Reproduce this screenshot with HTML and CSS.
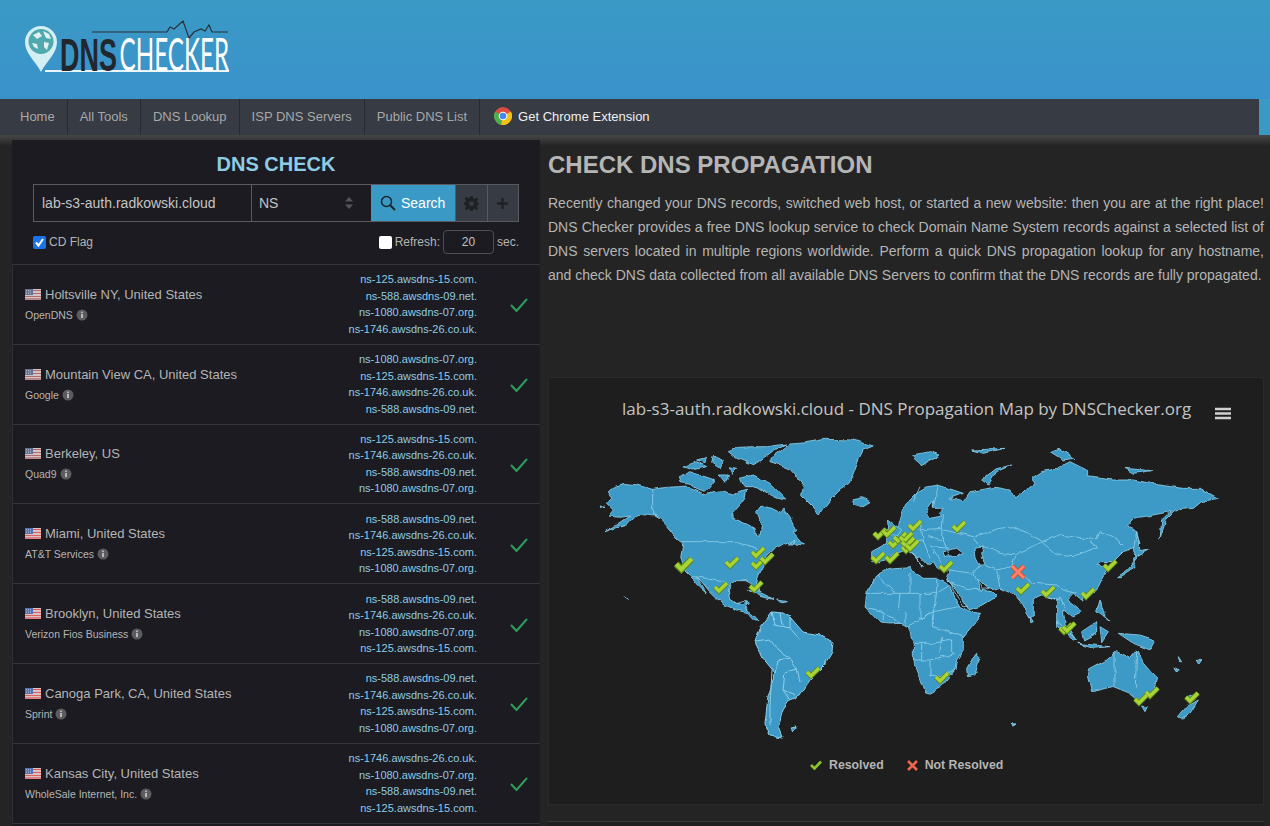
FILE: index.html
```html
<!DOCTYPE html>
<html lang="en">
<head>
<meta charset="utf-8">
<title>DNS Checker</title>
<link rel="stylesheet" href="styles.css">
</head>
<body>
<svg class="defs" width="0" height="0" aria-hidden="true">
  <defs>
    <g id="ok"><path d="M-6,0 L-2,4 L6,-4" class="ok-a"/><path d="M-6,0 L-2,4 L6,-4" class="ok-b"/></g>
    <g id="us"><rect width="16" height="11" fill="#e2e2e6"/><path d="M0,1.500H16M0,4.500H16M0,7.500H16M0,10H16" stroke="#d8605c" stroke-width="1.300"/><rect width="8" height="6" fill="#5570b0"/><path d="M1,1.500H7M1,3H7M1,4.500H7" stroke="#cdd6ec" stroke-width=".6" stroke-dasharray="1 1"/></g>
    <g id="info"><circle cx="6" cy="6" r="5.500" fill="#5c5c60"/><rect x="5.200" y="5" width="1.600" height="4" fill="#cfcfcf"/><rect x="5.200" y="2.600" width="1.600" height="1.500" fill="#cfcfcf"/></g>
    <filter id="rough" x="-2%" y="-2%" width="104%" height="104%">
      <feTurbulence type="fractalNoise" baseFrequency=".11" numOctaves="2" seed="4"/>
      <feDisplacementMap in="SourceGraphic" scale="4.500" xChannelSelector="R" yChannelSelector="G"/>
    </filter>
  </defs>
</svg>
<header class="top">
  <div class="brand">
    <svg class="logo" width="210" height="50" viewBox="0 0 210 50">
      <path d="M16,47 C10,35 0,29 0,17 A16,16 0 0 1 32,17 C32,29 22,35 16,47Z" fill="#d4eff4"/>
      <circle cx="16" cy="16.500" r="12.500" fill="#4fa9ad"/>
      <path d="M8,10l6,-3 3,4 -5,3zM18,6l6,3 2,5 -5,-1zM19,17l5,1 -2,7 -3,-3zM7,18l5,1 1,5 -4,-2z" fill="#e3f1f2"/>
      <path d="M20,46H204" stroke="#e9f6fb" stroke-width="2"/>
      <path d="M67,7H142L145,2 149,4 158,-4 164,13 169,7 176,4 180,6 184,0 187,7 203,7" fill="none" stroke="#2a3038" stroke-width="1.200"/>
      <g transform="translate(35 45.500) scale(.575 1)"><text class="logo-dns" textLength="99" lengthAdjust="spacingAndGlyphs">DNS</text></g>
      <g transform="translate(94.500 45.500) scale(.537 1)"><text class="logo-checker" textLength="204" lengthAdjust="spacingAndGlyphs">CHECKER</text></g>
    </svg>
  </div>
  <nav class="nav">
    <a class="nav-item nav-first">Home</a>
    <a class="nav-item">All Tools</a>
    <a class="nav-item">DNS Lookup</a>
    <a class="nav-item">ISP DNS Servers</a>
    <a class="nav-item">Public DNS List</a>
    <a class="nav-ext">
      <svg width="18" height="18" viewBox="0 0 18 18">
        <circle cx="9" cy="9" r="9" fill="#dd4b3e"/>
        <path d="M9,9 L1.200,4.500 A9,9 0 0 0 7,17.800Z" fill="#4caf50"/>
        <path d="M9,9 L7,17.800 A9,9 0 0 0 16.800,4.500Z" fill="#f4c20d"/>
        <circle cx="9" cy="9" r="4.300" fill="#fff"/>
        <circle cx="9" cy="9" r="3.300" fill="#4a86e8"/>
      </svg>
      Get Chrome Extension
    </a>
  </nav>
</header>
<main class="layout">
  <section class="side">
    <h2 class="side-title">DNS CHECK</h2>
    <div class="form">
      <div class="f-input">lab-s3-auth.radkowski.cloud</div>
      <div class="f-select">NS
        <svg width="8" height="12" viewBox="0 0 8 12"><path d="M4,0 L8,4.500H0ZM4,12 L8,7.500H0Z" fill="#55555a"/></svg>
      </div>
      <div class="f-search">
        <svg width="16" height="16" viewBox="0 0 16 16"><circle cx="6.500" cy="6.500" r="5" fill="none" stroke="#17252e" stroke-width="1.500"/><path d="M10.200,10.200 L15,15" stroke="#17252e" stroke-width="2"/></svg>
        Search
      </div>
      <div class="f-tool">
        <svg width="15" height="15" viewBox="0 0 16 16"><path d="M6.700,0H9.300l.4,2.500 1.600,.7 2.100,-1.500 1.800,1.800 -1.500,2.100 .7,1.600 2.500,.4V9.300l-2.500,.4 -.7,1.600 1.500,2.100 -1.800,1.800 -2.100,-1.500 -1.600,.7 -.4,2.500H6.700l-.4,-2.500 -1.600,-.7 -2.100,1.500 -1.800,-1.800 1.500,-2.100 -.7,-1.600 -2.500,-.4V6.700l2.500,-.4 .7,-1.600 -1.500,-2.100 1.800,-1.800 2.100,1.500 1.600,-.7ZM8,5.500a2.500,2.500 0 1 0 .01,0Z" fill="#1f2125" fill-rule="evenodd"/></svg>
      </div>
      <div class="f-tool">
        <svg width="13" height="13" viewBox="0 0 13 13"><path d="M6.500,1V12M1,6.500H12" stroke="#1f2125" stroke-width="2.400"/></svg>
      </div>
    </div>
    <div class="opts">
      <label class="opt"><span class="cb cb-on"><svg width="13" height="13" viewBox="0 0 13 13"><path d="M3,6.500 L5.500,9.500 L10,3" fill="none" stroke="#fff" stroke-width="2"/></svg></span>CD Flag</label>
      <div class="opt"><span class="cb"></span>Refresh:<span class="sec-box">20</span>sec.</div>
    </div>
    <ul class="rows">
      <li class="row"><div class="loc"><div class="place"><svg class="flag-dim" width="16" height="11"><use href="#us"/></svg>Holtsville NY, United States</div><div class="isp">OpenDNS <svg class="i" width="12" height="12"><use href="#info"/></svg></div></div><div class="ns">ns-125.awsdns-15.com.<br>ns-588.awsdns-09.net.<br>ns-1080.awsdns-07.org.<br>ns-1746.awsdns-26.co.uk.</div><svg class="tick" width="18" height="14" viewBox="0 0 18 14"><path d="M1,7 L6.500,13 L17,1" fill="none" stroke="#2f9e58" stroke-width="2"/></svg></li>
      <li class="row"><div class="loc"><div class="place"><svg class="flag-dim" width="16" height="11"><use href="#us"/></svg>Mountain View CA, United States</div><div class="isp">Google <svg class="i" width="12" height="12"><use href="#info"/></svg></div></div><div class="ns">ns-1080.awsdns-07.org.<br>ns-125.awsdns-15.com.<br>ns-1746.awsdns-26.co.uk.<br>ns-588.awsdns-09.net.</div><svg class="tick" width="18" height="14" viewBox="0 0 18 14"><path d="M1,7 L6.500,13 L17,1" fill="none" stroke="#2f9e58" stroke-width="2"/></svg></li>
      <li class="row"><div class="loc"><div class="place"><svg class="flag-dim" width="16" height="11"><use href="#us"/></svg>Berkeley, US</div><div class="isp">Quad9 <svg class="i" width="12" height="12"><use href="#info"/></svg></div></div><div class="ns">ns-125.awsdns-15.com.<br>ns-1746.awsdns-26.co.uk.<br>ns-588.awsdns-09.net.<br>ns-1080.awsdns-07.org.</div><svg class="tick" width="18" height="14" viewBox="0 0 18 14"><path d="M1,7 L6.500,13 L17,1" fill="none" stroke="#2f9e58" stroke-width="2"/></svg></li>
      <li class="row"><div class="loc"><div class="place"><svg width="16" height="11"><use href="#us"/></svg>Miami, United States</div><div class="isp">AT&amp;T Services <svg class="i" width="12" height="12"><use href="#info"/></svg></div></div><div class="ns">ns-588.awsdns-09.net.<br>ns-1746.awsdns-26.co.uk.<br>ns-125.awsdns-15.com.<br>ns-1080.awsdns-07.org.</div><svg class="tick" width="18" height="14" viewBox="0 0 18 14"><path d="M1,7 L6.500,13 L17,1" fill="none" stroke="#2f9e58" stroke-width="2"/></svg></li>
      <li class="row"><div class="loc"><div class="place"><svg width="16" height="11"><use href="#us"/></svg>Brooklyn, United States</div><div class="isp">Verizon Fios Business <svg class="i" width="12" height="12"><use href="#info"/></svg></div></div><div class="ns">ns-588.awsdns-09.net.<br>ns-1746.awsdns-26.co.uk.<br>ns-1080.awsdns-07.org.<br>ns-125.awsdns-15.com.</div><svg class="tick" width="18" height="14" viewBox="0 0 18 14"><path d="M1,7 L6.500,13 L17,1" fill="none" stroke="#2f9e58" stroke-width="2"/></svg></li>
      <li class="row"><div class="loc"><div class="place"><svg width="16" height="11"><use href="#us"/></svg>Canoga Park, CA, United States</div><div class="isp">Sprint <svg class="i" width="12" height="12"><use href="#info"/></svg></div></div><div class="ns">ns-588.awsdns-09.net.<br>ns-1746.awsdns-26.co.uk.<br>ns-125.awsdns-15.com.<br>ns-1080.awsdns-07.org.</div><svg class="tick" width="18" height="14" viewBox="0 0 18 14"><path d="M1,7 L6.500,13 L17,1" fill="none" stroke="#2f9e58" stroke-width="2"/></svg></li>
      <li class="row"><div class="loc"><div class="place"><svg width="16" height="11"><use href="#us"/></svg>Kansas City, United States</div><div class="isp">WholeSale Internet, Inc. <svg class="i" width="12" height="12"><use href="#info"/></svg></div></div><div class="ns">ns-1746.awsdns-26.co.uk.<br>ns-1080.awsdns-07.org.<br>ns-588.awsdns-09.net.<br>ns-125.awsdns-15.com.</div><svg class="tick" width="18" height="14" viewBox="0 0 18 14"><path d="M1,7 L6.500,13 L17,1" fill="none" stroke="#2f9e58" stroke-width="2"/></svg></li>
    </ul>
  </section>
  <section class="content">
    <h1 class="title">CHECK DNS PROPAGATION</h1>
    <p class="intro">Recently changed your DNS records, switched web host, or started a new website: then you are at the right place! DNS Checker provides a free DNS lookup service to check Domain Name System records against a selected list of DNS servers located in multiple regions worldwide. Perform a quick DNS propagation lookup for any hostname, and check DNS data collected from all available DNS Servers to confirm that the DNS records are fully propagated.</p>
    <div class="map-panel">
      <div class="map-head">
        <span class="map-title">lab-s3-auth.radkowski.cloud - DNS Propagation Map by DNSChecker.org</span>
        <svg class="burger" width="16" height="13" viewBox="0 0 16 13"><path d="M0,2H16M0,6.500H16M0,11H16" stroke="#d0d0d0" stroke-width="2.600"/></svg>
      </div>
      <svg class="map" width="716" height="330" viewBox="548 425 716 330">
        <g class="world">
        <g class="land" transform="translate(590 430) scale(.33333)">
          <path d="M55,185 L70,172 L105,160 L140,165 L188,178 L230,172 L265,170 L290,168 L320,180 L345,195 L360,190 L395,185 L430,195 L445,185 L470,178 L465,205 L450,225 L428,250 L430,265 L470,282 L495,295 L500,315 L510,315 L518,285 L505,260 L500,245 L515,225 L545,235 L575,250 L580,235 L600,260 L620,305 L610,310 L640,345 L600,340 L590,335 L575,345 L555,355 L540,370 L528,380 L525,400 L512,425 L500,445 L505,470 L510,485 L498,482 L485,460 L470,452 L440,452 L425,462 L415,480 L418,505 L440,520 L460,525 L470,510 L478,520 L465,535 L490,555 L505,570 L490,570 L470,548 L440,540 L405,525 L380,505 L355,480 L335,455 L320,440 L350,488 L325,465 L305,440 L285,420 L272,385 L278,340 L258,325 L240,300 L215,270 L190,255 L150,250 L128,265 L110,285 L75,295 L45,305 L90,280 L120,258 L90,262 L55,258 L70,240 L50,220 L65,205Z"/>
          <path d="M540,85 L560,70 L600,42 L650,38 L700,28 L790,30 L850,48 L820,60 L805,90 L790,130 L780,160 L750,180 L720,210 L695,240 L688,255 L670,235 L650,215 L635,200 L640,165 L620,140 L600,118 L570,105 L540,95Z"/>
          <path d="M785,210 L820,203 L840,215 L815,230 L790,222Z"/>
          <path d="M415,65 L445,52 L490,50 L530,50 L590,42 L550,62 L520,85 L490,105 L465,95 L440,85Z"/>
          <path d="M265,140 L300,125 L345,140 L375,150 L360,170 L345,185 L320,175 L300,160 L270,155Z"/>
          <path d="M280,110 L320,95 L350,110 L310,120Z"/>
          <path d="M320,90 L350,82 L345,98Z"/>
          <path d="M370,78 L400,90 L390,115 L365,100Z"/>
          <path d="M385,135 L415,135 L405,160Z"/>
          <path d="M415,110 L440,115 L425,130Z"/>
          <path d="M450,145 L490,135 L520,150 L540,160 L590,210 L560,205 L540,195 L500,170 L460,170Z"/>
          <path d="M470,478 L520,492 L552,508 L510,500Z"/>
          <path d="M560,510 L592,515 L570,520Z"/>
          <path d="M595,345 L618,330 L612,345Z"/>
          <path d="M30,228 L45,232 L35,235Z"/>
          <path d="M102,497 L118,508 L110,505Z"/>
          <path class="border" d="M188,178V252 L205,260M275,335 L440,335 L470,345 L505,355M310,440 L350,445 L395,455 L420,470M440,520 L470,510 L470,540"/>
        </g>
        <g class="land">
          <path d="M760,628 L772,612 L783,613 L790,617 L803,632 L820,635 L833,643 L832,652 L823,667 L810,680 L800,695 L790,700 L783,710 L778,727 L782,737 L770,735 L765,723 L768,697 L775,673 L762,657 L755,642Z"/>
          <path d="M791,728 L796,727 L793,731Z"/>
          <path d="M1012,723 L1016,723 L1013,725Z"/>
          <path class="border" d="M772,612 L775,625 L790,628 L800,640M755,642 L770,640 L778,650 L790,658 L797,668 L800,682M775,673 L778,660 L790,658M772,670 L770,705 L770,725M797,668 L785,672 L783,690 L795,695M790,700 L783,690M780,613 L782,625M790,617 L790,628"/>
        </g>
        <g class="land" transform="translate(900 430) scale(.33333)">
          <path d="M-40,310 L-5,290 L8,245 L25,215 L50,190 L85,170 L115,165 L190,190 L150,205 L190,215 L210,185 L240,180 L285,172 L330,180 L345,205 L365,190 L380,175 L405,165 L395,145 L425,125 L470,115 L510,95 L560,120 L560,140 L600,145 L640,150 L700,150 L780,165 L850,175 L900,175 L955,205 L905,215 L880,235 L825,240 L800,265 L780,325 L785,270 L810,245 L760,255 L700,265 L680,290 L710,305 L720,345 L670,365 L640,395 L600,395 L590,405 L625,415 L605,450 L590,480 L550,500 L545,510 L520,490 L500,510 L545,545 L515,560 L490,540 L495,580 L525,625 L470,580 L470,510 L445,500 L425,495 L400,505 L400,560 L390,565 L365,520 L345,495 L300,475 L285,480 L270,470 L235,455 L240,480 L275,485 L290,500 L240,530 L205,540 L155,460 L140,450 L150,420 L115,420 L100,395 L85,405 L60,380 L50,385 L70,410 L40,375 L20,360 L-25,375 L-30,385 L-60,395 L-85,395 L-85,365 L-40,340Z"/>
          <path d="M-30,414 L30,410 L35,425 L70,445 L110,445 L150,465 L175,530 L205,545 L245,550 L215,590 L190,620 L190,660 L170,690 L165,720 L125,770 L90,790 L75,785 L55,730 L40,690 L40,640 L25,590 L0,580 L-30,582 L-60,579 L-105,531 L-100,490 L-70,435Z"/>
          <path d="M230,670 L240,680 L225,735 L205,740 L203,715Z"/>
          <path d="M565,720 L620,690 L650,665 L690,685 L710,660 L730,700 L770,745 L760,785 L720,815 L690,790 L640,770 L600,780 L575,785 L562,735Z"/>
          <path d="M835,860 L860,830 L895,810 L870,850 L845,865Z"/>
          <path d="M860,800 L880,790 L885,810Z"/>
          <path d="M725,828 L742,830 L735,845Z"/>
          <path d="M650,440 L680,420 L710,385 L700,360 L710,305 L720,365 L745,360 L700,385 L705,410 L660,440Z"/>
          <path d="M470,575 L530,630 L520,630 L470,590Z"/>
          <path d="M530,640 L630,650 L580,655Z"/>
          <path d="M545,605 L590,575 L590,610 L550,630Z"/>
          <path d="M600,590 L625,605 L605,635Z"/>
          <path d="M655,610 L720,615 L765,630 L750,660 L700,640Z"/>
          <path d="M600,510 L615,560 L630,575 L590,545Z"/>
          <path d="M390,560 L400,575 L392,578Z"/>
          <path d="M-35,270 L5,300 L-10,320 L-40,310Z"/>
          <path d="M35,75 L90,65 L120,75 L65,105Z"/>
          <path d="M245,150 L290,115 L335,105 L290,125 L265,165Z"/>
          <path d="M450,65 L480,55 L525,85 L490,90Z"/>
          <path d="M215,60 L315,55 L250,70Z"/>
          <path d="M675,115 L755,122 L700,130Z"/>
          <path d="M835,680 L845,695 L838,695Z"/>
          <path d="M822,712 L838,720 L828,722Z"/>
          <path d="M888,695 L905,690 L897,702Z"/>
          <path d="M333,880 L345,880 L338,885Z"/>
          <path class="gap" d="M100,215 L75,250 L90,265 L125,258 L115,250 L130,235 L100,235Z"/>
          <path class="gap" d="M128,365 L170,355 L190,370 L165,382 L135,380Z"/>
          <path class="gap" d="M225,355 L250,350 L245,370 L255,405 L240,405 L228,380Z"/>
          <path class="gap" d="M155,460 L200,530 L190,530 L160,480Z"/>
          <path class="gap" d="M232,450 L270,475 L250,478Z"/>
          <path class="border" d="M220,320 L300,295 L340,290 L385,310 L425,335 L480,315 L520,320 L590,330 L600,305 L640,320 L670,345M425,335 L470,375 L520,380 L590,350 L570,335M220,325 L240,350 L280,360 L300,370 L345,375 L405,345 L425,335M345,380 L335,410 L400,460 L470,465 L490,480 L530,490M290,420 L300,475M250,405 L290,420 L335,410M150,420 L215,430 L250,405M215,430 L235,455M140,450 L200,475 L240,480M115,165 L100,235M130,255 L125,320 L150,380M60,275 L70,330 L90,385M-40,340 L70,330M10,345 L50,385M130,300 L220,320M480,500 L500,545M440,500 L480,510M85,320 L130,330M90,350 L150,355M55,300 L125,295M60,170 L40,215M100,360 L125,395"/>
          <path class="border" d="M30,430 L30,490 L110,490 L150,465M110,445 L110,490 L100,545 L60,570M-70,435 L-15,490 L30,490M-105,531 L-50,545 L0,580M60,570 L100,545 L175,530M100,545 L100,590 L190,620M40,640 L100,640 L155,630M40,690 L90,690 L165,670M90,690 L90,735 L125,740 L165,720M60,570 L25,590M-100,490 L-15,490M155,630 L155,670M0,490 L-5,540M60,490 L60,570M-50,545 L-50,579M15,545 L15,585M125,620 L120,670M65,640 L65,690"/>
          <path class="border" d="M710,660 L706,770M645,670 L645,770"/>
        </g>
        </g>
        <g class="markers">
          <use href="#ok" transform="translate(684 564) scale(1.300)"/>
          <use href="#ok" x="732" y="562"/><use href="#ok" x="758" y="552"/><use href="#ok" x="758" y="563"/><use href="#ok" x="767" y="558"/>
          <use href="#ok" x="721" y="587"/><use href="#ok" x="756" y="586"/><use href="#ok" x="813" y="672"/>
          <use href="#ok" x="880" y="533"/><use href="#ok" x="889" y="531"/><use href="#ok" x="915" y="525"/>
          <use href="#ok" x="895" y="542"/><use href="#ok" x="900" y="537"/><use href="#ok" x="906" y="537"/><use href="#ok" x="908" y="547"/><use href="#ok" x="908" y="542"/><use href="#ok" x="912" y="545"/>
          <use href="#ok" x="878" y="557"/><use href="#ok" x="892" y="557"/><use href="#ok" x="959" y="526"/><use href="#ok" x="946" y="566"/>
          <use href="#ok" x="1023" y="588"/><use href="#ok" x="1048" y="591"/><use href="#ok" x="1088" y="593"/><use href="#ok" x="1110" y="565"/>
          <use href="#ok" x="1066" y="628"/><use href="#ok" x="1069" y="627"/><use href="#ok" x="942" y="677"/>
          <use href="#ok" x="1152" y="692"/><use href="#ok" x="1141" y="699"/><use href="#ok" x="1192" y="697"/>
          <path d="M1012,566 L1024,578M1024,566 L1012,578" class="x-a"/><path d="M1012,566 L1024,578M1024,566 L1012,578" class="x-b"/>
        </g>
      </svg>
      <div class="legend">
        <span class="leg"><svg width="12" height="10" viewBox="0 0 12 10"><path d="M1,5 L4.500,8.500 L11,1.500" fill="none" stroke="#8fc42e" stroke-width="2.600"/></svg>Resolved</span>
        <span class="leg"><svg width="11" height="11" viewBox="0 0 11 11"><path d="M1,1 L10,10M10,1 L1,10" stroke="#f0664c" stroke-width="2.600"/></svg>Not Resolved</span>
      </div>
    </div>
    <div class="next-panel"></div>
  </section>
</main>
</body>
</html>
```
FILE: styles.css
```css
* { box-sizing: border-box; }
html, body { margin: 0; height: 826px; overflow: hidden; }
body { background: #242424; font-family: "Liberation Sans", Arial, sans-serif; color: #bdbdbd; }
.defs { position: absolute; }
.top { background: linear-gradient(#3a9ac5, #3a92cb 99px, #3a9ac5 99px); }
.brand { height: 99px; padding: 25px 0 0 25px; }
.logo { display: block; overflow: visible; }
.logo-dns { font: 700 47px "Liberation Sans", sans-serif; fill: #22272e; }
.logo-checker { font: 400 47px Lato, sans-serif; fill: #fff; }
.nav { height: 36px; width: 1259px; background: #363b44; display: flex; align-items: stretch; font-size: 13px; }
.nav-item { display: flex; align-items: center; padding: 0 12px 2px; border-right: 1px solid #272a30; color: #a8a8a8; }
.nav-first { padding-left: 20px; }
.nav-ext { display: flex; align-items: center; gap: 6px; margin-left: 14px; padding-bottom: 2px; color: #f0f0f0; }
.layout { display: flex; align-items: flex-start; padding: 5px 0 0 12px; gap: 8px; background: linear-gradient(#474747, #242424 11px); height: 691px; }
.side { width: 528px; background: #1b1b21; flex: none; height: 686px; overflow: hidden; }
.side-title { margin: 0; padding-top: 11px; height: 44px; text-align: center; color: #8ecbe5; font-size: 20px; line-height: 26px; }
.form { display: flex; margin: 0 21px; height: 38px; font-size: 14px; border: 1px solid #5a5a5e; }
.f-input { width: 218px; padding-left: 8px; display: flex; align-items: center; color: #c4c4c4; border-right: 1px solid #5a5a5e; }
.f-select { width: 119px; padding: 0 18px 0 7px; display: flex; align-items: center; justify-content: space-between; color: #c4c4c4; }
.f-search { width: 84px; background: #3a9ac5; color: #fff; display: flex; align-items: center; gap: 5px; padding-left: 9px; }
.f-tool { width: 32px; flex: 1; background: #363b44; display: flex; align-items: center; justify-content: center; border-left: 1px solid #5a5a5e; }
.opts { display: flex; justify-content: space-between; align-items: center; margin: 8px 21px 0; height: 24px; font-size: 12px; color: #b5b5b5; }
.opt { display: flex; align-items: center; gap: 3px; }
.cb { width: 13px; height: 13px; background: #fff; border-radius: 2px; display: block; }
.cb-on { background: #1a73e8; }
.cb svg { display: block; }
.sec-box { width: 51px; height: 24px; border: 1px solid #4e4e52; border-radius: 4px; display: flex; align-items: center; justify-content: center; color: #c4c4c4; }
.rows { list-style: none; margin: 10px 0 0; padding: 0; border-top: 1px solid #36363a; }
.row { height: 79.800px; display: flex; align-items: center; border-bottom: 1px solid #36363a; border-left: 1px solid #2e2e32; padding: 0 12px; }
.loc { flex: 1; margin-top: -1px; }
.place { display: flex; align-items: center; gap: 4px; font-size: 13px; color: #b5b5b5; }
.flag-dim { filter: saturate(.55); }
.isp { font-size: 10.500px; color: #b5b5b5; margin-top: 7px; display: flex; align-items: center; gap: 3px; }
.i { display: block; }
.ns { text-align: right; color: #8ecbe5; font-size: 11px; line-height: 16.500px; margin-right: 33px; }
.tick { flex: none; margin-top: 2px; }
.content { flex: 1; min-width: 0; margin-right: 6px; }
.title { margin: 0; padding-top: 12px; height: 43px; font-size: 24px; line-height: 26px; color: #b5b5b5; }
.intro { margin: 0; font-size: 14px; line-height: 24px; color: #b5b5b5; text-align: justify; height: 194px; padding-top: 8px; }
.map-panel { height: 428px; background: #1e1e1e; border: 1px solid #2a2a2a; position: relative; }
.map-head { height: 47px; position: relative; padding: 20px 0 0 73px; }
.map-title { font-family: "Open Sans", sans-serif; font-size: 17px; color: #c4c4c4; line-height: 22px; display: block; white-space: nowrap; }
.burger { position: absolute; left: 666px; top: 29px; }
.map { display: block; margin-left: -1px; }
.world { filter: url(#rough); }
.land path { fill: #3d9ac6; stroke: #8fd0ea; stroke-width: 1; stroke-linejoin: round; }
g[transform] > path { stroke-width: 2.500; }
.land .border { fill: none; stroke: #8fd0ea; }
.land .gap { fill: #1e1e1e; stroke: #8fd0ea; }
.ok-a { fill: none; stroke: #5f8a1d; stroke-width: 5.200; }
.ok-b { fill: none; stroke: #a8d534; stroke-width: 3.200; }
.x-a { fill: none; stroke: #c7513d; stroke-width: 5; }
.x-b { fill: none; stroke: #ff8268; stroke-width: 3; }
.legend { position: absolute; left: 261px; top: 380px; display: flex; gap: 23px; font-size: 12.300px; font-weight: 700; color: #b5b5b5; }
.leg { display: flex; align-items: center; gap: 7px; }
.next-panel { height: 20px; margin-top: 16px; background: #1e1e1e; border-top: 1px solid #3a3a3a; }
```
